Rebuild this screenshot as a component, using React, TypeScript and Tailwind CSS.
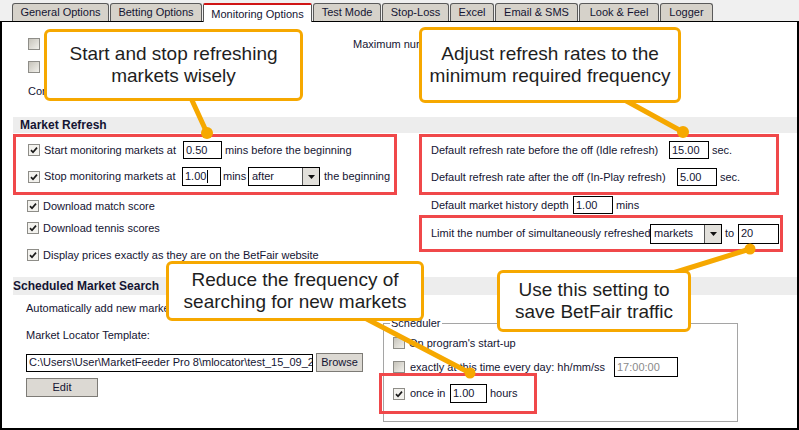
import type { ReactNode } from "react";

const tabs = [
  { label: "General Options", w: "w-[97px]" },
  { label: "Betting Options", w: "w-[92px]" },
  { label: "Monitoring Options", w: "w-[109px]", active: true },
  { label: "Test Mode", w: "w-[68px]" },
  { label: "Stop-Loss", w: "w-[67px]" },
  { label: "Excel", w: "w-[44px]" },
  { label: "Email & SMS", w: "w-[83px]" },
  { label: "Look & Feel", w: "w-[80px]" },
  { label: "Logger", w: "w-[53px]" },
];

function Check({ on }: { on?: boolean }) {
  if (!on) {
    return <span className="h-[12px] w-[12px] shrink-0 border border-[#8e8d88] bg-linear-to-br from-[#c6c3ba] to-[#f2f1ec]" />;
  }
  return (
    <span className="flex h-[12px] w-[12px] shrink-0 items-center justify-center border border-[#8e8d88] bg-[#f3f2ee]">
      <svg width="8" height="8" viewBox="0 0 8 8">
        <path d="M1 4.2 L3 6.3 L7 1.6" fill="none" stroke="#1a1a1a" strokeWidth="1.7" />
      </svg>
    </span>
  );
}

function Field({ value, w, h, muted, caret }: { value: string; w: string; h: string; muted?: boolean; caret?: boolean }) {
  return (
    <span className={`flex shrink-0 items-center overflow-hidden whitespace-nowrap border border-black bg-white pl-[2px] ${w} ${h} ${muted ? "text-[#8a8a8a]" : ""}`}>
      {value}
      {caret && <span className="ml-px h-[13px] w-px bg-black" />}
    </span>
  );
}

function Select({ value, w, h }: { value: string; w: string; h: string }) {
  return (
    <span className={`flex shrink-0 border border-black bg-white ${w} ${h}`}>
      <span className="flex flex-1 items-center pl-[3px]">{value}</span>
      <span className="flex w-[17px] items-center justify-center border-l border-[#555] bg-[#e2e0db]">
        <svg width="7" height="4" viewBox="0 0 7 4">
          <path d="M0 0h7L3.5 4z" fill="#111" />
        </svg>
      </span>
    </span>
  );
}

function CheckRow({ on, children, className = "" }: { on?: boolean; children: ReactNode; className?: string }) {
  return (
    <div className={`flex h-[12px] items-center whitespace-nowrap ${className}`}>
      <Check on={on} />
      <span className="ml-[4px]">{children}</span>
    </div>
  );
}

function Button({ children, w }: { children: ReactNode; w: string }) {
  return (
    <span className={`flex h-[19px] shrink-0 items-center justify-center border border-[#7d7b76] bg-[#dcd9d3] ${w}`}>
      {children}
    </span>
  );
}

function Callout({ className, lines }: { className: string; lines: string[] }) {
  return (
    <div
      className={`absolute flex flex-col items-center justify-center rounded-[6px] border-[3px] border-[#f6a800] bg-white text-[19px] leading-[22px] text-[#1e1e1e] ${className}`}
    >
      {lines.map((l) => (
        <span key={l}>{l}</span>
      ))}
    </div>
  );
}

function TabStrip() {
  return (
    <div className="flex h-[21px] items-end gap-px pl-[12px]">
      {tabs.map((t) =>
        t.active ? (
          <div
            key={t.label}
            className={`relative z-10 -mb-px flex h-[19px] items-center justify-center rounded-t-[2px] border-x border-t-2 border-x-[#555] border-t-[#d01515] bg-white pt-[1px] ${t.w}`}
          >
            {t.label}
          </div>
        ) : (
          <div
            key={t.label}
            className={`flex h-[18px] items-center justify-center rounded-t-[3px] border border-b-0 border-[#5a5a5a] bg-[#d6d2ca] ${t.w}`}
          >
            {t.label}
          </div>
        )
      )}
    </div>
  );
}

export default function App() {
  return (
    <div className="relative h-[430px] w-[799px] overflow-hidden bg-[#f0f0f0] font-['Liberation_Sans',Arial,sans-serif] text-[11px] leading-[13px] text-[#141432]">
      <TabStrip />

      <div className="h-[409px] border-x-2 border-t border-b-2 border-black bg-white">
        {/* general monitoring switches */}
        <div className="flex h-[95px]">
          <div className="ml-[26px] w-[325px] pt-[16px]">
            <CheckRow>Refresh markets in the background</CheckRow>
            <CheckRow className="mt-[11px]">Load saved markets on start-up</CheckRow>
            <div className="mt-[12px]">Concurrent refresh threads</div>
          </div>
          <div className="pt-[16px] whitespace-nowrap">Maximum number of monitored markets</div>
        </div>

        <div className="ml-[11px] h-[16px] bg-[#ededed] pl-[7px] text-[12px] font-bold leading-[16px]">Market Refresh</div>

        <div className="flex h-[144px]">
          {/* left: start / stop */}
          <div className="ml-[11px] w-[406px]">
            <div className="mt-px h-[61px] w-[384px] border-[3px] border-[#f0484a] pl-[12px] pt-[4px]">
              <div className="flex h-[18px] items-center whitespace-nowrap">
                <Check on />
                <span className="ml-[4px] w-[139px]">Start monitoring markets at</span>
                <Field value="0.50" w="w-[39px]" h="h-[18px]" />
                <span className="ml-[3px]">mins before the beginning</span>
              </div>
              <div className="mt-[8px] flex h-[19px] items-center whitespace-nowrap">
                <Check on />
                <span className="ml-[4px] w-[138px]">Stop monitoring markets at</span>
                <Field value="1.00" w="w-[39px]" h="h-[19px]" caret />
                <span className="ml-[2px] w-[25px]">mins</span>
                <Select value="after" w="w-[72px]" h="h-[19px]" />
                <span className="ml-[4px]">the beginning</span>
              </div>
            </div>
            <div className="pl-[14px]">
              <CheckRow on className="mt-[5px]">Download match score</CheckRow>
              <CheckRow on className="mt-[10px]">Download tennis scores</CheckRow>
              <CheckRow on className="mt-[15px]">Display prices exactly as they are on the BetFair website</CheckRow>
            </div>
          </div>

          {/* right: refresh rates */}
          <div className="whitespace-nowrap">
            <div className="mt-px h-[61px] w-[360px] border-[3px] border-[#f0484a] pl-[9px] pt-[4px]">
              <div className="flex h-[18px] items-center">
                <span className="w-[238px]">Default refresh rate before the off (Idle refresh)</span>
                <Field value="15.00" w="w-[40px]" h="h-[18px]" />
                <span className="ml-[3px]">sec.</span>
              </div>
              <div className="mt-[9px] flex h-[18px] items-center">
                <span className="w-[246px]">Default refresh rate after the off (In-Play refresh)</span>
                <Field value="5.00" w="w-[40px]" h="h-[18px]" />
                <span className="ml-[3px]">sec.</span>
              </div>
            </div>
            <div className="mt-px flex h-[18px] items-center pl-[12px]">
              <span className="w-[142px]">Default market history depth</span>
              <Field value="1.00" w="w-[40px]" h="h-[18px]" />
              <span className="ml-[3px]">mins</span>
            </div>
            <div className="mt-px flex h-[37px] w-[364px] items-center border-[3px] border-[#f0484a] pl-[9px]">
              <span className="w-[219px]">Limit the number of simultaneously refreshed</span>
              <Select value="markets" w="w-[72px]" h="h-[20px]" />
              <span className="ml-[3px] w-[13px]">to</span>
              <Field value="20" w="w-[41px]" h="h-[20px]" />
            </div>
          </div>
        </div>

        <div className="ml-[11px] h-[18px] bg-[#ededed] text-[12px] font-bold leading-[18px]">Scheduled Market Search</div>

        <div className="flex">
          <div className="w-[381px] pl-[24px] pt-[7px] whitespace-nowrap">
            <div>Automatically add new markets to the Monitored list:</div>
            <div className="mt-[14px]">Market Locator Template:</div>
            <div className="mt-[11px] flex items-center">
              <Field value={"C:\\Users\\User\\MarketFeeder Pro 8\\mlocator\\test_15_09_2013.xml"} w="w-[287px]" h="h-[18px]" />
              <span className="ml-[3px]">
                <Button w="w-[47px]">Browse</Button>
              </span>
            </div>
            <div className="mt-[6px]">
              <Button w="w-[72px]">Edit</Button>
            </div>
          </div>

          <div className="relative mt-[28px] h-[99px] w-[355px] border border-[#a5a5a5] pl-[9px] whitespace-nowrap">
            <span className="absolute -top-[7px] left-[6px] bg-white px-px">Scheduler</span>
            <CheckRow className="mt-[13px]">On program's start-up</CheckRow>
            <div className="mt-[8px] flex h-[20px] items-center">
              <Check />
              <span className="ml-[5px] w-[204px]">exactly at this time every day: hh/mm/ss</span>
              <Field value="17:00:00" w="w-[64px]" h="h-[20px]" muted />
            </div>
            <div className="-mt-[4px] -ml-[14px] flex h-[41px] w-[158px] items-center border-[3px] border-[#f0484a] pl-[11px]">
              <Check on />
              <span className="ml-[5px] w-[40px]">once in</span>
              <Field value="1.00" w="w-[37px]" h="h-[19px]" />
              <span className="ml-[3px]">hours</span>
            </div>
          </div>
        </div>
      </div>

      {/* annotation pointers */}
      <svg className="pointer-events-none absolute inset-0" width="799" height="430">
        <g stroke="#f6a800" strokeWidth="5" strokeLinecap="round">
          <line x1="185" y1="85" x2="207" y2="133" />
          <line x1="610" y1="92" x2="683" y2="132" />
          <line x1="340" y1="305" x2="470" y2="373" />
          <line x1="660" y1="277" x2="750" y2="249" />
        </g>
        <g fill="#f6a800">
          <circle cx="207" cy="133" r="6" />
          <circle cx="683" cy="132" r="6" />
          <circle cx="470" cy="373" r="5.5" />
          <circle cx="750" cy="249" r="5.5" />
        </g>
      </svg>

      <Callout className="left-[44px] top-[29px] h-[72px] w-[259px]" lines={["Start and stop refreshing", "markets wisely"]} />
      <Callout className="left-[419px] top-[27px] h-[76px] w-[262px]" lines={["Adjust refresh rates to the", "minimum required frequency"]} />
      <Callout className="left-[166px] top-[261px] h-[60px] w-[258px]" lines={["Reduce the frequency of", "searching for new markets"]} />
      <Callout className="left-[497px] top-[270px] h-[62px] w-[194px]" lines={["Use this setting to", "save BetFair traffic"]} />
    </div>
  );
}
